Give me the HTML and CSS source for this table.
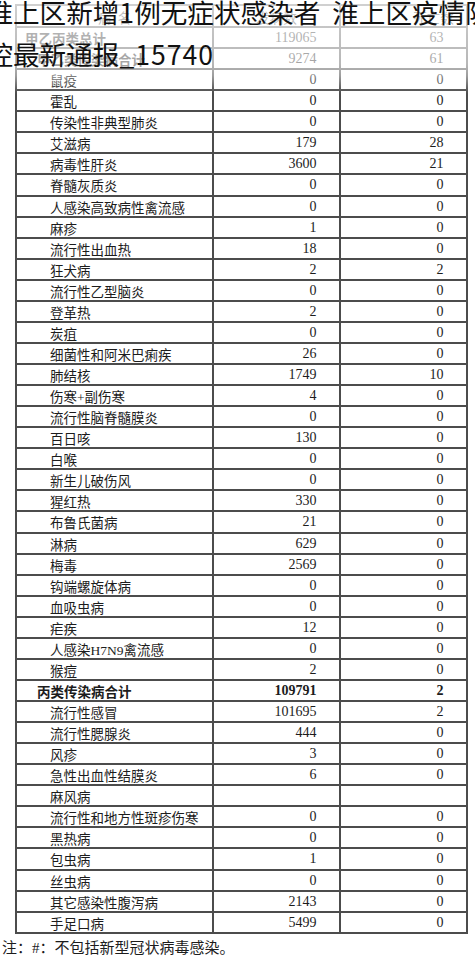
FILE: index.html
```html
<!DOCTYPE html>
<html lang="zh-CN">
<head>
<meta charset="utf-8">
<title>淮上区新增1例无症状感染者 淮上区疫情防控最新通报</title>
<link rel="stylesheet" href="styles.css">
</head>
<body>
<div class="page">
  <div class="sheet">
    <div class="grid">
      <div class="cell head">病&nbsp;&nbsp;名</div><div class="cell head">发病数</div><div class="cell head head-r">死亡数</div>
      <div class="cell name total">甲乙丙类总计</div><div class="cell num">119065</div><div class="cell num">63</div>
      <div class="cell name sub">甲乙类传染病合计</div><div class="cell num">9274</div><div class="cell num">61</div>
      <div class="cell name">鼠疫</div><div class="cell num">0</div><div class="cell num">0</div>
      <div class="cell name">霍乱</div><div class="cell num">0</div><div class="cell num">0</div>
      <div class="cell name">传染性非典型肺炎</div><div class="cell num">0</div><div class="cell num">0</div>
      <div class="cell name">艾滋病</div><div class="cell num">179</div><div class="cell num">28</div>
      <div class="cell name">病毒性肝炎</div><div class="cell num">3600</div><div class="cell num">21</div>
      <div class="cell name">脊髓灰质炎</div><div class="cell num">0</div><div class="cell num">0</div>
      <div class="cell name">人感染高致病性禽流感</div><div class="cell num">0</div><div class="cell num">0</div>
      <div class="cell name">麻疹</div><div class="cell num">1</div><div class="cell num">0</div>
      <div class="cell name">流行性出血热</div><div class="cell num">18</div><div class="cell num">0</div>
      <div class="cell name">狂犬病</div><div class="cell num">2</div><div class="cell num">2</div>
      <div class="cell name">流行性乙型脑炎</div><div class="cell num">0</div><div class="cell num">0</div>
      <div class="cell name">登革热</div><div class="cell num">2</div><div class="cell num">0</div>
      <div class="cell name">炭疽</div><div class="cell num">0</div><div class="cell num">0</div>
      <div class="cell name">细菌性和阿米巴痢疾</div><div class="cell num">26</div><div class="cell num">0</div>
      <div class="cell name">肺结核</div><div class="cell num">1749</div><div class="cell num">10</div>
      <div class="cell name">伤寒+副伤寒</div><div class="cell num">4</div><div class="cell num">0</div>
      <div class="cell name">流行性脑脊髓膜炎</div><div class="cell num">0</div><div class="cell num">0</div>
      <div class="cell name">百日咳</div><div class="cell num">130</div><div class="cell num">0</div>
      <div class="cell name">白喉</div><div class="cell num">0</div><div class="cell num">0</div>
      <div class="cell name">新生儿破伤风</div><div class="cell num">0</div><div class="cell num">0</div>
      <div class="cell name">猩红热</div><div class="cell num">330</div><div class="cell num">0</div>
      <div class="cell name">布鲁氏菌病</div><div class="cell num">21</div><div class="cell num">0</div>
      <div class="cell name">淋病</div><div class="cell num">629</div><div class="cell num">0</div>
      <div class="cell name">梅毒</div><div class="cell num">2569</div><div class="cell num">0</div>
      <div class="cell name">钩端螺旋体病</div><div class="cell num">0</div><div class="cell num">0</div>
      <div class="cell name">血吸虫病</div><div class="cell num">0</div><div class="cell num">0</div>
      <div class="cell name">疟疾</div><div class="cell num">12</div><div class="cell num">0</div>
      <div class="cell name">人感染H7N9禽流感</div><div class="cell num">0</div><div class="cell num">0</div>
      <div class="cell name">猴痘</div><div class="cell num">2</div><div class="cell num">0</div>
      <div class="cell name sub">丙类传染病合计</div><div class="cell num bold">109791</div><div class="cell num bold">2</div>
      <div class="cell name">流行性感冒</div><div class="cell num">101695</div><div class="cell num">2</div>
      <div class="cell name">流行性腮腺炎</div><div class="cell num">444</div><div class="cell num">0</div>
      <div class="cell name">风疹</div><div class="cell num">3</div><div class="cell num">0</div>
      <div class="cell name">急性出血性结膜炎</div><div class="cell num">6</div><div class="cell num">0</div>
      <div class="cell name">麻风病</div><div class="cell num"></div><div class="cell num"></div>
      <div class="cell name">流行性和地方性斑疹伤寒</div><div class="cell num">0</div><div class="cell num">0</div>
      <div class="cell name">黑热病</div><div class="cell num">0</div><div class="cell num">0</div>
      <div class="cell name">包虫病</div><div class="cell num">1</div><div class="cell num">0</div>
      <div class="cell name">丝虫病</div><div class="cell num">0</div><div class="cell num">0</div>
      <div class="cell name">其它感染性腹泻病</div><div class="cell num">2143</div><div class="cell num">0</div>
      <div class="cell name">手足口病</div><div class="cell num">5499</div><div class="cell num">0</div>
    </div>
    <p class="note">注：#：不包括新型冠状病毒感染。</p>
    <div class="fade"></div>
  </div>
  <h1 class="title">淮上区新增1例无症状感染者&nbsp; 淮上区疫情防<br>控最新通报<span class="digits">_15740</span></h1>
</div>
</body>
</html>
```

FILE: styles.css
```css
* {
  box-sizing: border-box;
  margin: 0;
  padding: 0;
}

html, body {
  margin: 0;
  background: #ffffff;
}

.page {
  position: relative;
  width: 475px;
  height: 969px;
  overflow: hidden;
  background: #ffffff;
}

.sheet {
  position: relative;
}

.grid {
  margin: 4px 0 0 15px;
  width: 453px;
  display: grid;
  grid-template-columns: 197px 127px 127px;
  grid-template-rows: 22px;
  grid-auto-rows: 21.07px;
  border-left: 2px solid #4c4c4c;
  border-top: 2px solid #4c4c4c;
}

.cell {
  display: flex;
  align-items: center;
  border-right: 2px solid #4c4c4c;
  border-bottom: 2px solid #4c4c4c;
  font-family: "Liberation Serif", "Noto Sans CJK SC", serif;
  color: #1c1c1c;
  white-space: nowrap;
  padding-top: 1px;
}

.head {
  justify-content: center;
  font-size: 13.5px;
}

.head-r {
  padding-left: 60px;
}

.name {
  justify-content: flex-start;
  padding-left: 33px;
  font-size: 13.5px;
}

.name.total {
  padding-left: 8px;
  font-weight: 700;
}

.name.sub {
  padding-left: 20px;
  font-weight: 700;
}

.num {
  justify-content: flex-end;
  padding-right: 22.5px;
  font-size: 14px;
}

.num.bold {
  font-weight: 700;
}

.note {
  margin-top: 4px;
  padding-left: 2px;
  font-family: "Liberation Serif", "Noto Sans CJK SC", serif;
  font-size: 15px;
  line-height: 20px;
  color: #1c1c1c;
  white-space: nowrap;
}

.fade {
  position: absolute;
  left: 0;
  top: 0;
  width: 475px;
  height: 92px;
  background: linear-gradient(to bottom,
    rgba(255,255,255,0.74) 0px,
    rgba(255,255,255,0.66) 30px,
    rgba(255,255,255,0.6) 60px,
    rgba(255,255,255,0.45) 72px,
    rgba(255,255,255,0.12) 84px,
    rgba(255,255,255,0) 90px);
}

.title {
  position: absolute;
  left: -13.6px;
  top: -8.8px;
  font-family: "Noto Sans CJK SC", sans-serif;
  font-size: 26.6px;
  line-height: 42px;
  font-weight: 400;
  color: #111111;
  white-space: nowrap;
}

.digits {
  letter-spacing: 1px;
}
```
